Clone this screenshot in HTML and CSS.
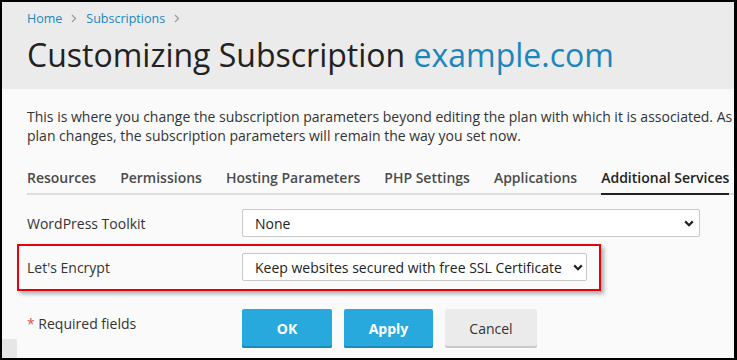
FILE: index.html
```html
<!DOCTYPE html>
<html lang="en">
<head>
<meta charset="utf-8">
<title>Customizing Subscription example.com</title>
<link rel="stylesheet" href="styles.css">
</head>
<body>
<div class="frame">
  <header class="page-header">
    <nav class="breadcrumbs">
      <a href="#" class="crumb">Home</a>
      <svg class="crumb-sep" width="6" height="9" viewBox="0 0 6 9"><path d="M1 1l3.5 3.5L1 8" fill="none" stroke="#9a9a9a" stroke-width="1.2"/></svg>
      <a href="#" class="crumb">Subscriptions</a>
      <svg class="crumb-sep" width="6" height="9" viewBox="0 0 6 9"><path d="M1 1l3.5 3.5L1 8" fill="none" stroke="#9a9a9a" stroke-width="1.2"/></svg>
    </nav>
    <h1 class="title">Customizing Subscription <span class="domain">example.com</span></h1>
  </header>
  <main class="content">
    <p class="intro">This is where you change the subscription parameters beyond editing the plan with which it is associated. As<br>plan changes, the subscription parameters will remain the way you set now.</p>
    <ul class="tabs">
      <li class="tab">Resources</li>
      <li class="tab">Permissions</li>
      <li class="tab">Hosting Parameters</li>
      <li class="tab">PHP Settings</li>
      <li class="tab">Applications</li>
      <li class="tab active">Additional Services</li>
    </ul>
    <form class="form">
      <div class="row">
        <label class="label">WordPress Toolkit</label>
        <div class="select select-wide">
          <span class="select-text">None</span>
          <svg class="chevron" width="10" height="7" viewBox="0 0 10 7"><path d="M1.2 1.4L5 5.2l3.8-3.8" fill="none" stroke="#222" stroke-width="2.2"/></svg>
        </div>
      </div>
      <div class="row row-highlight">
        <label class="label">Let's Encrypt</label>
        <div class="select select-auto">
          <span class="select-text">Keep websites secured with free SSL Certificate</span>
          <svg class="chevron" width="10" height="7" viewBox="0 0 10 7"><path d="M1.2 1.4L5 5.2l3.8-3.8" fill="none" stroke="#222" stroke-width="2.2"/></svg>
        </div>
      </div>
      <div class="row row-actions">
        <div class="label required"><span class="asterisk">*</span> Required fields</div>
        <div class="buttons">
          <button type="button" class="btn btn-primary">OK</button>
          <button type="button" class="btn btn-primary">Apply</button>
          <button type="button" class="btn btn-default">Cancel</button>
        </div>
      </div>
    </form>
  </main>
  <div class="corner-tab"></div>
</div>
</body>
</html>
```

FILE: styles.css
```css
* { box-sizing: border-box; }
html, body { margin: 0; padding: 0; }
body {
  width: 737px;
  height: 360px;
  overflow: hidden;
  font-family: "Open Sans", "DejaVu Sans", sans-serif;
  color: #333;
  background: #000;
}
.frame {
  position: relative;
  width: 737px;
  height: 360px;
  border-top: 2px solid #000;
  border-left: 2px solid #000;
  border-right: 3px solid #000;
  border-bottom: 2px solid #000;
  background: #fafafa;
  overflow: hidden;
}
.page-header {
  background: #ebebeb;
  padding: 7px 0 12px 25px;
}
.breadcrumbs {
  display: flex;
  align-items: center;
  height: 18px;
  font-size: 12.5px;
}
.crumb {
  color: #1a86bb;
  text-decoration: none;
}
.crumb-sep {
  margin: 0 9px 0 9px;
}
.title {
  margin: 6px 0 0 0;
  font-size: 32px;
  line-height: 44px;
  font-weight: 400;
  color: #222;
  white-space: nowrap;
}
.domain { color: #1a86bb; }
.content {
  padding: 0 0 0 25px;
}
.intro {
  margin: 18px 0 0 0;
  font-size: 14px;
  line-height: 19px;
  white-space: nowrap;
  color: #333;
}
.tabs {
  list-style: none;
  margin: 23px 0 0 0;
  padding: 0;
  display: flex;
  gap: 24px;
  border-bottom: 2px solid #dedede;
  width: 900px;
}
.tab {
  font-size: 14px;
  line-height: 20px;
  font-weight: 600;
  color: #4b4b4b;
  padding-bottom: 5px;
  margin-bottom: -2px;
  border-bottom: 2px solid transparent;
  white-space: nowrap;
}
.tab.active {
  color: #222;
  border-bottom-color: #222;
}
.form {
  margin-top: 14px;
}
.row {
  display: flex;
  align-items: center;
}
.label {
  width: 215px;
  font-size: 14px;
  color: #333;
}
.select {
  display: flex;
  align-items: center;
  height: 28px;
  padding: 0 5px 0 12px;
  background: #fff;
  border: 1px solid #c8c8c8;
  border-radius: 2px;
  font-size: 14px;
  color: #222;
}
.select-wide {
  width: 458px;
  justify-content: space-between;
}
.select-auto { padding-right: 3px; }
.select-text { white-space: nowrap; }
.chevron { margin-left: 11px; flex: none; }
.row-highlight {
  width: fit-content;
  margin: 7px 0 0 -10px;
  padding: 7px 12px 8px 8px;
  border: 2px solid #e8000b;
  box-shadow: 3px 3px 4px rgba(0,0,0,0.3);
}
.row-actions {
  margin-top: 18px;
  align-items: flex-start;
}
.required {
  padding-top: 5px;
}
.asterisk { color: #d9534f; }
.buttons {
  display: flex;
  gap: 12px;
}
.btn {
  height: 39px;
  border: none;
  border-radius: 2px;
  font-family: "Open Sans", "DejaVu Sans", sans-serif;
  font-size: 14px;
  padding: 0;
}
.btn-primary {
  width: 90px;
  background: #28a9dd;
  color: #fff;
  font-weight: 700;
  box-shadow: inset 0 -2px 0 #1e8ab8;
}
.btn-primary + .btn-primary { width: 89px; }
.btn-default {
  width: 92px;
  background: #ebebeb;
  color: #333;
  box-shadow: inset 0 -2px 0 #c9c9c9;
}
.corner-tab {
  position: absolute;
  left: 0;
  bottom: 0;
  width: 15px;
  height: 19px;
  background: #e6e6e6;
  border-top-right-radius: 2px;
}
```
